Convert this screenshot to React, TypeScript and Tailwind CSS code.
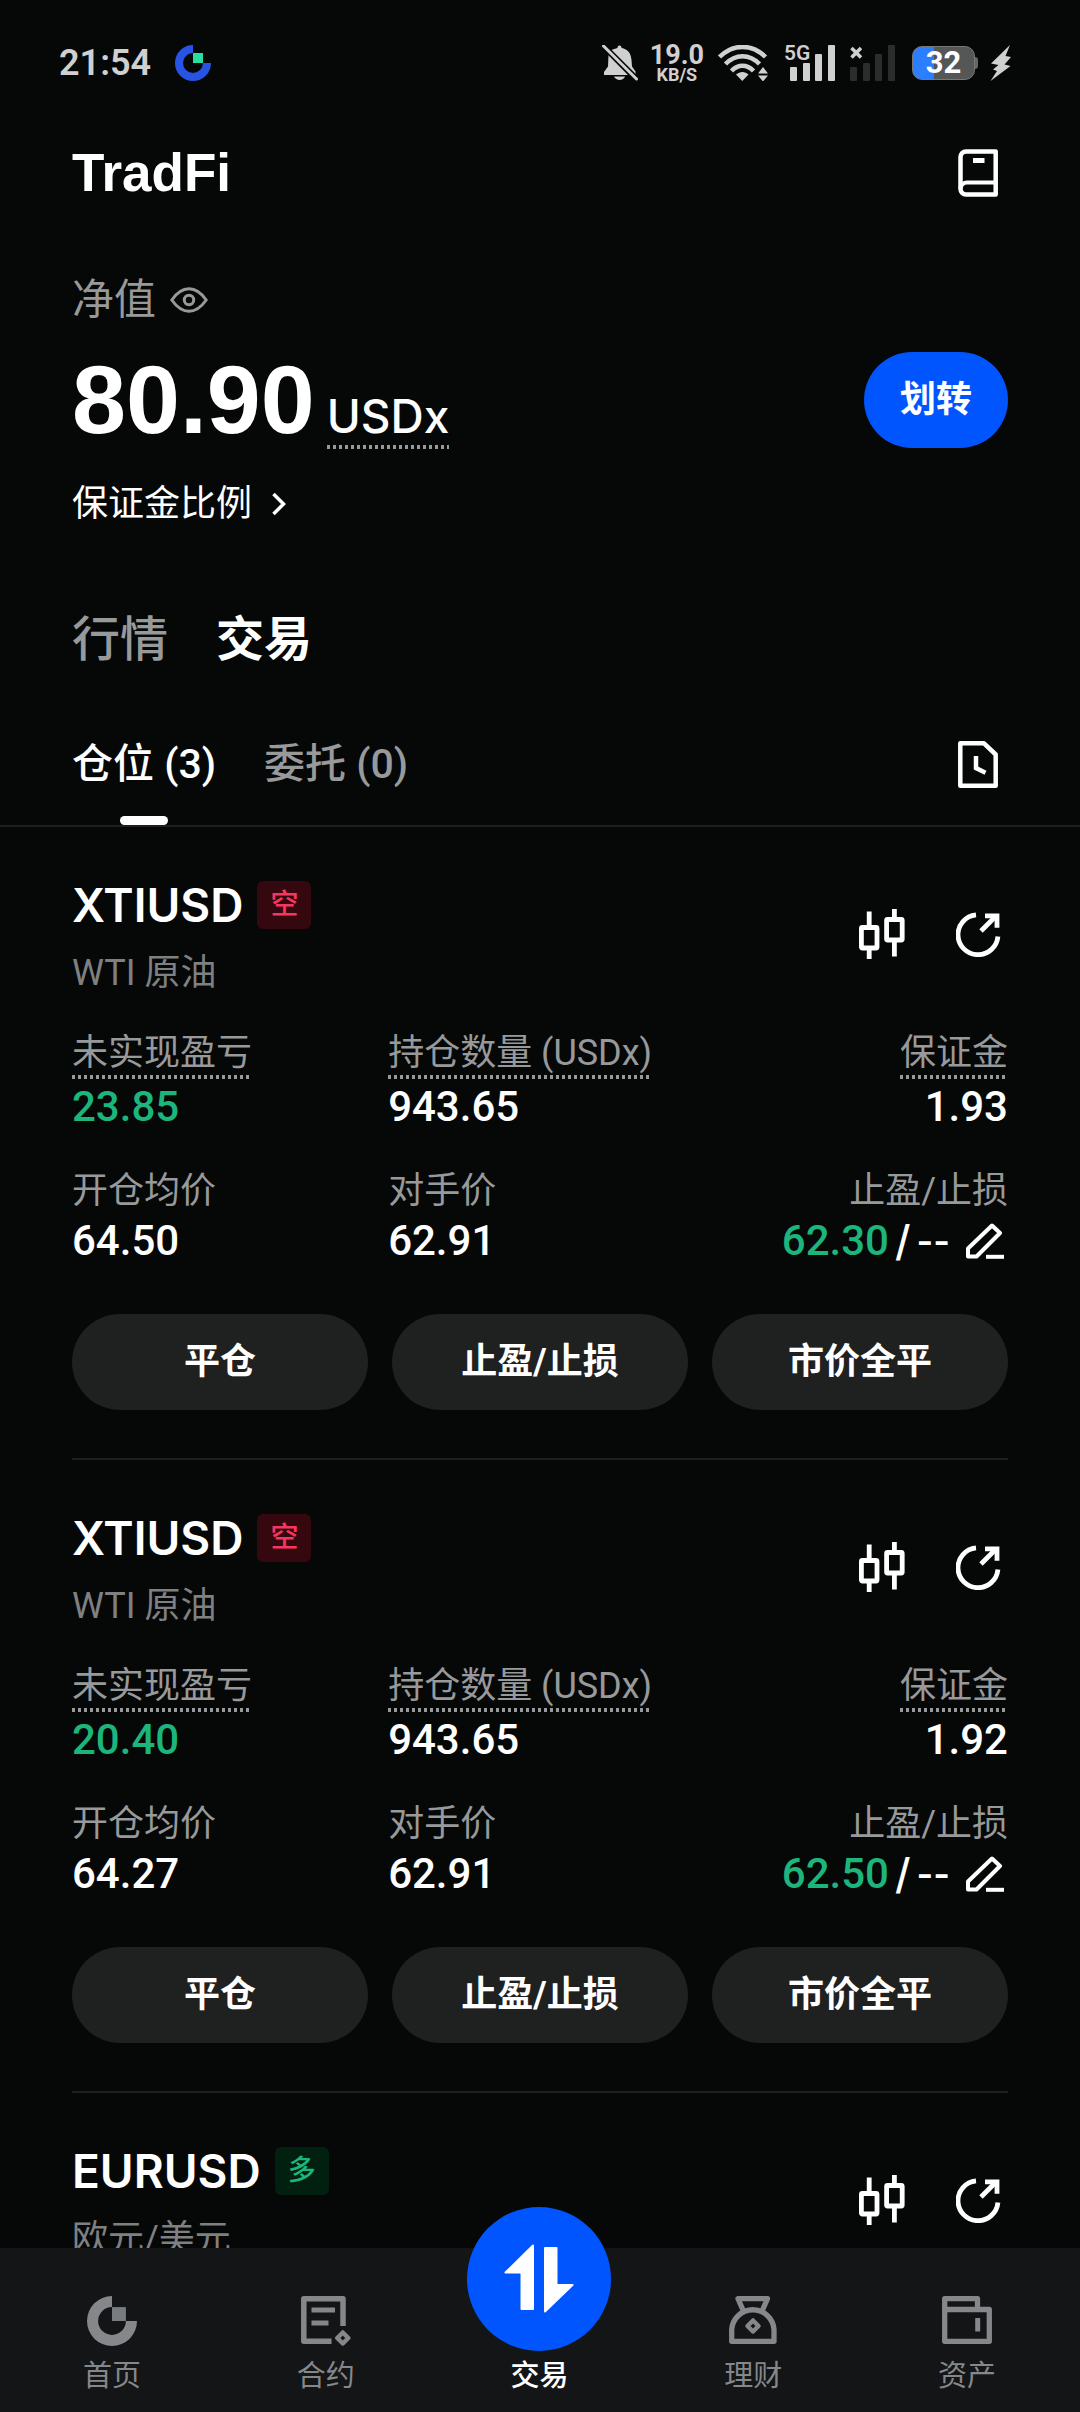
import type { ReactNode } from "react";
import clsx from "clsx";

type Position = {
    id: number;
    symbol: string;
    name: string;
    side: "long" | "short";
    details?: {
        pnl: string;
        size: string;
        margin: string;
        entry: string;
        counter: string;
        takeProfit: string;
    };
};

const positions: Position[] = [
    {
        id: 1,
        symbol: "XTIUSD",
        name: "WTI 原油",
        side: "short",
        details: { pnl: "23.85", size: "943.65", margin: "1.93", entry: "64.50", counter: "62.91", takeProfit: "62.30" },
    },
    {
        id: 2,
        symbol: "XTIUSD",
        name: "WTI 原油",
        side: "short",
        details: { pnl: "20.40", size: "943.65", margin: "1.92", entry: "64.27", counter: "62.91", takeProfit: "62.50" },
    },
    { id: 3, symbol: "EURUSD", name: "欧元/美元", side: "long" },
];

const actions = ["平仓", "止盈/止损", "市价全平"];

function LogoMark({ className, accent }: { className: string; accent: string }) {
    return (
        <svg viewBox="0 0 36 36" className={className} fill="currentColor" aria-hidden="true">
            <path d="M18 0A18 18 0 1 0 36 18H28A10 10 0 1 1 18 8Z" />
            <rect x="18" y="8" width="10" height="10" className={accent} />
        </svg>
    );
}

function BellOffIcon() {
    return (
        <svg viewBox="0 0 36 36" className="size-9" fill="currentColor" aria-hidden="true">
            <path d="M9 5.500C11 4.200 13.500 3.400 15.500 3V2.500a2 2 0 0 1 4 0V3C26 4 29 8.500 29.500 15L30 21.500 33.500 26.500V29.500Z" />
            <path d="M6.500 10 26 30H2V27L6 21.500Z" />
            <path d="M12 31.500H23C21.500 36 14 36 12 31.500Z" />
            <path d="M1.500 1 34.500 34" fill="none" stroke="#060808" strokeWidth="6" />
            <path d="M1.500 1 34.500 34" fill="none" stroke="currentColor" strokeWidth="3" strokeLinecap="round" />
        </svg>
    );
}

function WifiIcon() {
    return (
        <svg viewBox="0 0 50 36" className="h-9 w-[50px]" aria-hidden="true">
            <g fill="none" stroke="currentColor" strokeWidth="4.500">
                <path d="M1.500 12C15-1.500 34-1.500 47.500 12" />
                <path d="M7.500 19C17.500 8.500 31.500 8.500 41.500 19" />
                <path d="M13.500 26C20 19 29 19 35.500 26" />
            </g>
            <path d="M18 29.500C22 26 27 26 30.500 29.500L24.300 36Z" fill="currentColor" />
            <path d="M40 28.500 45 22 50 28.500ZM40 30.500H50L45 36.500Z" fill="currentColor" />
        </svg>
    );
}

function SignalBars({ className }: { className: string }) {
    return (
        <g className={className}>
            <rect x="6" y="22" width="7" height="14" rx="1" />
            <rect x="19" y="18" width="7" height="18" rx="1" />
            <rect x="31" y="9" width="7" height="27" rx="1" />
            <rect x="44" y="0" width="7" height="36" rx="1" />
        </g>
    );
}

function StatusBar() {
    return (
        <div className="flex h-[126px] shrink-0 items-center justify-between pr-[68px] pl-[59px] text-[#d0d0d0]">
            <div className="flex items-center gap-6">
                <time className="text-4xl font-semibold">21:54</time>
                <LogoMark className="size-9 text-[#2854e6]" accent="fill-[#27e0a0]" />
            </div>
            <div className="flex items-center">
                <BellOffIcon />
                <div className="ml-3 flex flex-col items-center font-bold">
                    <span className="text-[27px] leading-6">19.0</span>
                    <span className="text-lg leading-4">KB/S</span>
                </div>
                <div className="ml-3.5">
                    <WifiIcon />
                </div>
                <svg viewBox="0 0 52 36" className="ml-4 h-9 w-[52px] overflow-visible" aria-label="5G">
                    <SignalBars className="fill-[#d0d0d0]" />
                    <text x="0" y="15" className="fill-[#d0d0d0] text-[21px] font-semibold">5G</text>
                </svg>
                <svg viewBox="0 0 52 36" className="ml-2 h-9 w-[52px]" aria-hidden="true">
                    <SignalBars className="fill-[#2b2c2c]" />
                    <path d="M7.500 3 17 12.500M17 3 7.500 12.500" stroke="currentColor" strokeWidth="3.500" />
                </svg>
                <div className="ml-4 flex items-center">
                    <div className="flex h-[34px] w-[63px] items-center justify-center rounded-[10px] border border-[#777] bg-linear-to-r from-[#2b7fff] from-35% to-[#555656] to-35% text-[31px] font-bold text-white">
                        32
                    </div>
                    <div className="h-3 w-[3px] rounded-r-sm bg-[#666]" />
                </div>
                <svg viewBox="0 0 22 36" className="ml-3 h-9 w-[22px]" fill="currentColor" aria-hidden="true">
                    <path d="M20 0 1 18.500 8.500 20 3 24.500 7 26 .5 36 20.500 21 14.500 19.500 21 12 15.500 11Z" />
                </svg>
            </div>
        </div>
    );
}

function BookIcon() {
    return (
        <svg viewBox="0 0 40 48" className="h-12 w-10" fill="none" stroke="currentColor" strokeWidth="4.500" strokeLinejoin="round" aria-hidden="true">
            <path d="M37.700 2.500H8A5.500 5.500 0 0 0 2.500 8V40A5.500 5.500 0 0 0 8 45.500H37.700Z" />
            <path d="M2.500 40A6.500 6.500 0 0 1 9 33.500H37.700" strokeWidth="4" />
            <path d="M15 11.500H26.500" strokeWidth="5" />
        </svg>
    );
}

function HistoryIcon() {
    return (
        <svg viewBox="0 0 40 47" className="h-[47px] w-10" fill="none" stroke="currentColor" strokeWidth="4.500" strokeLinejoin="round" aria-hidden="true">
            <path d="M2.300 2.300H26L37.700 13.500V44.700H2.300Z" />
            <path d="M18 15V27L27.500 31.700" strokeLinejoin="miter" />
        </svg>
    );
}

function CandlesIcon() {
    return (
        <svg viewBox="0 0 46 50" className="h-[50px] w-[46px]" fill="none" stroke="currentColor" strokeWidth="4.800" aria-hidden="true">
            <rect x="2.400" y="18.500" width="15.600" height="20.500" rx="1" />
            <path d="M10.200 2.500V17M10.200 40.500V50" />
            <rect x="27.600" y="10.500" width="15.600" height="20.500" rx="1" />
            <path d="M35.400 0V9M35.400 32.500V47.500" />
        </svg>
    );
}

function ShareIcon() {
    return (
        <svg viewBox="0 0 45 45" className="size-[45px]" fill="none" stroke="currentColor" strokeWidth="4.800" aria-hidden="true">
            <path d="M20 2.800A20 20 0 1 0 41.900 24.500" />
            <path d="M25 19 39.500 4.500" />
            <path d="M29 3.800H41V15.700" />
        </svg>
    );
}

function PencilIcon() {
    return (
        <svg viewBox="0 0 38 36" className="h-9 w-[38px]" fill="none" stroke="currentColor" strokeWidth="4" aria-hidden="true">
            <path d="M26 2.500 34 10 10.500 33.500H2V25.500Z" strokeLinejoin="round" />
            <path d="M20 33.800H38" />
        </svg>
    );
}

function Dotted({ className = "pb-1", children }: { className?: string; children: ReactNode }) {
    return (
        <span
            className={clsx(
                "bg-[linear-gradient(90deg,#98999b_50%,transparent_50%)] bg-[length:6px_4px] bg-bottom-left bg-repeat-x",
                className,
            )}
        >
            {children}
        </span>
    );
}

function Balance() {
    return (
        <section className="px-[72px] pt-14">
            <div className="flex items-center gap-3.5 text-[42px] leading-12 text-[#98999b]">
                <span>净值</span>
                <button type="button" aria-label="显示净值">
                    <svg viewBox="0 0 38 26" className="h-[26px] w-[38px]" fill="none" stroke="currentColor" strokeWidth="3" aria-hidden="true">
                        <path d="M1.800 13C7 5.500 12.500 1.800 19 1.800S31 5.500 36.200 13C31 20.500 25.500 24.200 19 24.200S7 20.500 1.800 13Z" />
                        <circle cx="19" cy="13" r="4.700" />
                    </svg>
                </button>
            </div>
            <div className="mt-7 flex h-24 items-center justify-between">
                <p className="flex items-baseline gap-3 leading-none">
                    <strong className="font-['Liberation_Sans',sans-serif] text-[97px] font-bold">80.90</strong>
                    <Dotted className="pb-2.5">
                        <span className="font-['Inter',sans-serif] text-[46px] font-medium">USDx</span>
                    </Dotted>
                </p>
                <button type="button" className="h-24 rounded-full bg-[#0055ff] px-9 text-4xl font-bold">
                    划转
                </button>
            </div>
            <button type="button" className="mt-8 flex items-center gap-5 text-4xl leading-12">
                保证金比例
                <svg viewBox="0 0 14 24" className="h-6 w-3.5" fill="none" stroke="currentColor" strokeWidth="3.500" aria-hidden="true">
                    <path d="M1.500 2 11.500 12 1.500 22" />
                </svg>
            </button>
        </section>
    );
}

function Metric({ label, dotted, end, children }: { label: string; dotted?: boolean; end?: boolean; children: ReactNode }) {
    return (
        <div className={clsx("flex flex-col gap-1", end ? "items-end" : "items-start")}>
            <dt className="flex text-4xl leading-11 whitespace-nowrap text-[#98999b]">{dotted ? <Dotted>{label}</Dotted> : label}</dt>
            <dd className="flex items-center text-[42px] leading-12 font-medium">{children}</dd>
        </div>
    );
}

function PositionCard({ position }: { position: Position }) {
    const { details } = position;

    return (
        <li className="border-b-2 border-[#1d1f1f] pt-[54px] pb-12 last:border-b-0">
            <div className="flex items-center justify-between">
                <div>
                    <div className="flex h-12 items-center gap-3.5">
                        <h2 className="font-['Inter',sans-serif] text-[46px] font-semibold">{position.symbol}</h2>
                        <span
                            className={clsx(
                                "flex h-12 items-center rounded-md px-[13px] text-[28px] font-medium",
                                position.side === "short" ? "bg-[#35070f] text-[#f5365f]" : "bg-[#02200f] text-[#1cb57c]",
                            )}
                        >
                            {position.side === "short" ? "空" : "多"}
                        </span>
                    </div>
                    <p className="mt-5 text-4xl leading-12 text-[#7f8082]">{position.name}</p>
                </div>
                <div className="flex items-center gap-[51px] pr-[7px] pb-2.5">
                    <button type="button" aria-label="K线">
                        <CandlesIcon />
                    </button>
                    <button type="button" aria-label="分享">
                        <ShareIcon />
                    </button>
                </div>
            </div>

            {details ? (
                <>
                    <dl className="mt-[34px] grid grid-cols-[1.02fr_1fr_1fr] gap-y-[38px]">
                        <Metric label="未实现盈亏" dotted>
                            <span className="text-[#1cb57c]">{details.pnl}</span>
                        </Metric>
                        <Metric label="持仓数量 (USDx)" dotted>
                            {details.size}
                        </Metric>
                        <Metric label="保证金" dotted end>
                            {details.margin}
                        </Metric>
                        <Metric label="开仓均价">{details.entry}</Metric>
                        <Metric label="对手价">{details.counter}</Metric>
                        <Metric label="止盈/止损" end>
                            <span className="text-[#1cb57c]">{details.takeProfit}</span>
                            <span className="ml-1.5 font-['Inter',sans-serif]">/</span>
                            <span className="ml-1.5 font-['Inter',sans-serif] text-4xl font-semibold">--</span>
                            <button type="button" className="mr-1 ml-4" aria-label="编辑止盈止损">
                                <PencilIcon />
                            </button>
                        </Metric>
                    </dl>
                    <div className="mt-[49px] grid grid-cols-3 gap-6">
                        {actions.map((action) => (
                            <button key={action} type="button" className="h-24 rounded-full bg-[#1f2120] text-4xl font-bold">
                                {action}
                            </button>
                        ))}
                    </div>
                </>
            ) : null}
        </li>
    );
}

function ContractIcon() {
    return (
        <svg viewBox="0 0 50 50" className="size-[50px]" fill="none" stroke="currentColor" strokeWidth="5.500" strokeLinejoin="round" aria-hidden="true">
            <path d="M42 30V2.800H2.800V45.200H30.500" />
            <path d="M10.500 14H34M10.500 27H27.500" strokeWidth="5" />
            <path d="M41.800 36.500 47.300 42 41.800 47.500 36.300 42Z" strokeWidth="4.500" />
        </svg>
    );
}

function MoneyBagIcon() {
    return (
        <svg viewBox="0 0 48 50" className="h-[50px] w-12" fill="none" stroke="currentColor" strokeWidth="5.300" strokeLinejoin="round" aria-hidden="true">
            <path d="M14 14 9 2.700H38.500L33.500 14" />
            <path d="M2.700 45.300V33.500A21.200 21.200 0 0 1 45 33.500V45.300Z" />
            <path d="M24 24.500 29.500 30 24 35.500 18.500 30Z" strokeWidth="4.500" />
        </svg>
    );
}

function WalletIcon() {
    return (
        <svg viewBox="0 0 50 50" className="size-[50px]" fill="none" stroke="currentColor" strokeWidth="5.300" strokeLinejoin="round" aria-hidden="true">
            <path d="M2.700 13.500V2.700H35.500V13.500" />
            <path d="M2.700 13.500H47.300V45.300H2.700Z" />
            <path d="M35.700 22V35.500" strokeWidth="5" />
        </svg>
    );
}

function NavItem({ label, icon }: { label: string; icon: ReactNode }) {
    return (
        <a href="#" className="flex flex-col items-center text-[#85878a]">
            <span className="mt-12">{icon}</span>
            <span className="mt-3 text-[29px] leading-9">{label}</span>
        </a>
    );
}

function BottomNav() {
    return (
        <nav className="relative z-10 grid h-[164px] shrink-0 grid-cols-5 bg-[#131516] pr-1.5 pl-[5px]">
            <NavItem label="首页" icon={<LogoMark className="size-[50px]" accent="opacity-90" />} />
            <NavItem label="合约" icon={<ContractIcon />} />
            <a href="#" aria-current="page" className="-mt-[41px] flex flex-col items-center text-white">
                <svg viewBox="0 0 144 144" className="size-36 rounded-full bg-[#0055ff]" fill="currentColor" stroke="currentColor" strokeWidth="2" strokeLinejoin="round" aria-hidden="true">
                    <path d="M66 38.500 38.500 65.500H54.500V102H66Z" />
                    <path d="M78 41V104.500L105.500 78H89.500V41Z" />
                </svg>
                <span className="mt-[7px] text-[29px] leading-9 font-medium">交易</span>
            </a>
            <NavItem label="理财" icon={<MoneyBagIcon />} />
            <NavItem label="资产" icon={<WalletIcon />} />
        </nav>
    );
}

export default function App() {
    return (
        <div className="flex h-screen flex-col bg-[#060808] font-['Roboto','Noto_Sans_CJK_SC',sans-serif] text-white">
            <StatusBar />
            <main className="min-h-0 flex-1 overflow-y-auto [scrollbar-width:none]">
                <header className="flex h-[94px] items-center justify-between pr-[82px] pl-[72px]">
                    <h1 className="font-['Liberation_Sans',sans-serif] text-[53px] font-bold">TradFi</h1>
                    <button type="button" aria-label="帮助">
                        <BookIcon />
                    </button>
                </header>

                <Balance />

                <div className="mt-20 flex gap-12 px-[72px] text-5xl leading-16">
                    <button type="button" className="font-medium text-[#98999b]">
                        行情
                    </button>
                    <button type="button" className="font-bold">
                        交易
                    </button>
                </div>

                <div className="mt-8 flex h-[123px] items-stretch justify-between border-b-2 border-[#1d1f1f] pr-[82px] pl-[72px]">
                    <div className="flex gap-12 text-[41px] font-medium">
                        <button type="button" className="relative">
                            仓位 (3)
                            <span className="absolute bottom-0 left-1/2 h-[9px] w-12 -translate-x-1/2 rounded-full bg-white" />
                        </button>
                        <button type="button" className="text-[#98999b]">
                            委托 (0)
                        </button>
                    </div>
                    <button type="button" aria-label="历史记录">
                        <HistoryIcon />
                    </button>
                </div>

                <ul className="px-[72px]">
                    {positions.map((position) => (
                        <PositionCard key={position.id} position={position} />
                    ))}
                </ul>
            </main>
            <BottomNav />
        </div>
    );
}
